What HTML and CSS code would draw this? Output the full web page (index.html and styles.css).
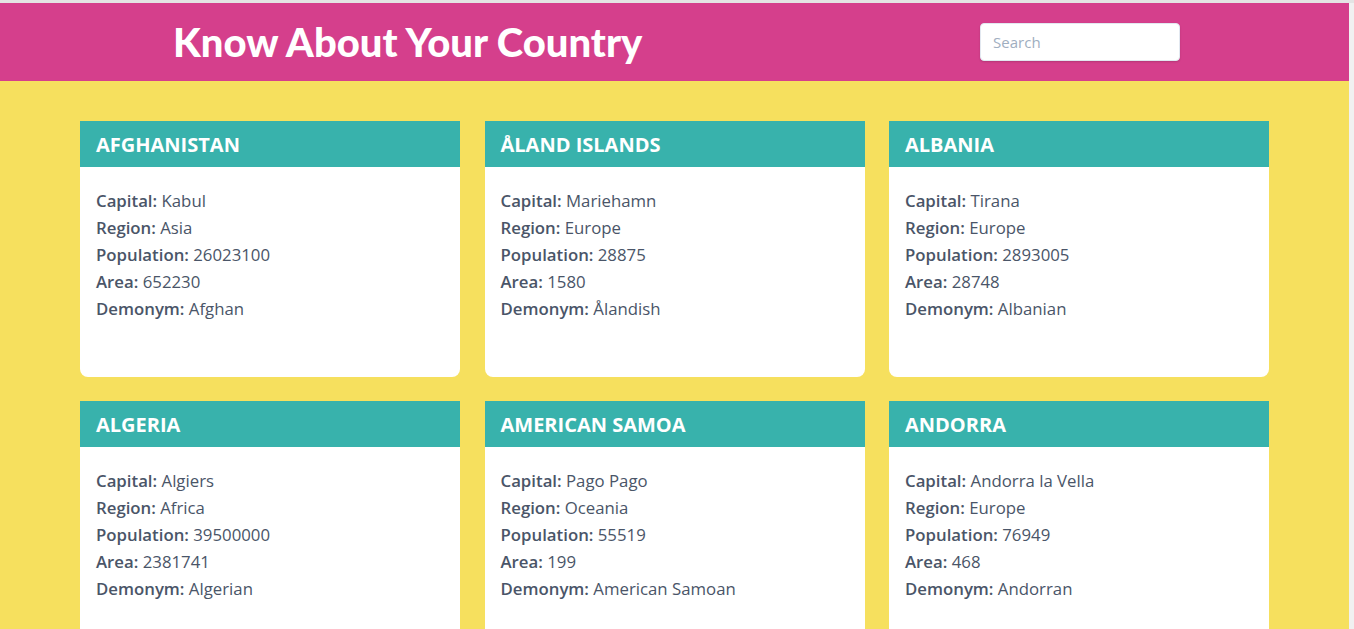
FILE: index.html
```html
<!DOCTYPE html>
<html lang="en">
<head>
<meta charset="utf-8">
<title>Know About Your Country</title>
<link rel="stylesheet" href="styles.css">
</head>
<body>
<div class="page">
<header class="topbar">
  <h1 class="brand">Know About Your Country</h1>
  <input class="search" type="text" placeholder="Search">
</header>
<main class="grid">
  <article class="card">
    <h2 class="card-title">Afghanistan</h2>
    <div class="card-body">
      <p><b>Capital:</b> Kabul</p>
      <p><b>Region:</b> Asia</p>
      <p><b>Population:</b> 26023100</p>
      <p><b>Area:</b> 652230</p>
      <p><b>Demonym:</b> Afghan</p>
    </div>
  </article>
  <article class="card">
    <h2 class="card-title">Åland Islands</h2>
    <div class="card-body">
      <p><b>Capital:</b> Mariehamn</p>
      <p><b>Region:</b> Europe</p>
      <p><b>Population:</b> 28875</p>
      <p><b>Area:</b> 1580</p>
      <p><b>Demonym:</b> Ålandish</p>
    </div>
  </article>
  <article class="card">
    <h2 class="card-title">Albania</h2>
    <div class="card-body">
      <p><b>Capital:</b> Tirana</p>
      <p><b>Region:</b> Europe</p>
      <p><b>Population:</b> 2893005</p>
      <p><b>Area:</b> 28748</p>
      <p><b>Demonym:</b> Albanian</p>
    </div>
  </article>
  <article class="card">
    <h2 class="card-title">Algeria</h2>
    <div class="card-body">
      <p><b>Capital:</b> Algiers</p>
      <p><b>Region:</b> Africa</p>
      <p><b>Population:</b> 39500000</p>
      <p><b>Area:</b> 2381741</p>
      <p><b>Demonym:</b> Algerian</p>
    </div>
  </article>
  <article class="card">
    <h2 class="card-title">American Samoa</h2>
    <div class="card-body">
      <p><b>Capital:</b> Pago Pago</p>
      <p><b>Region:</b> Oceania</p>
      <p><b>Population:</b> 55519</p>
      <p><b>Area:</b> 199</p>
      <p><b>Demonym:</b> American Samoan</p>
    </div>
  </article>
  <article class="card">
    <h2 class="card-title">Andorra</h2>
    <div class="card-body">
      <p><b>Capital:</b> Andorra la Vella</p>
      <p><b>Region:</b> Europe</p>
      <p><b>Population:</b> 76949</p>
      <p><b>Area:</b> 468</p>
      <p><b>Demonym:</b> Andorran</p>
    </div>
  </article>
</main>
</div>
</body>
</html>
```

FILE: styles.css
```css
* { box-sizing: border-box; }
html, body { margin: 0; padding: 0; }
html { background: #f1f1f1; }
body {
  border-top: 3px solid #e4e4e4;
  height: 629px;
  overflow: hidden;
  font-family: "Open Sans", "Noto Sans", sans-serif;
  color: #4A5568;
}
.page {
  width: calc(100% - 5px);
  height: 100%;
  background: #F6E05E;
}
.topbar {
  background: #D53F8C;
  height: 78px;
  display: flex;
  align-items: center;
  justify-content: space-around;
  padding-left: 4px;
}
.brand {
  margin: 0;
  font-family: Lato, sans-serif;
  font-weight: 900;
  font-size: 40px;
  color: #fff;
}
.search {
  width: 200px;
  height: 38px;
  border: 1px solid #e2e8f0;
  border-radius: 4px;
  padding: 0 12px;
  font-family: "Open Sans", sans-serif;
  font-size: 15px;
  color: #4A5568;
  box-shadow: 0 1px 2px rgba(0,0,0,0.15);
  outline: none;
}
.search::placeholder { color: #a0aec0; }
.grid {
  width: 1189px;
  margin: 40px auto 0;
  display: grid;
  grid-template-columns: repeat(3, 380px);
  column-gap: 24.5px;
  row-gap: 24px;
}
.card {
  background: #fff;
  height: 256px;
  border-radius: 0 0 8px 8px;
  overflow: hidden;
}
.card-title {
  margin: 0;
  height: 46px;
  background: #38B2AC;
  color: #fff;
  text-transform: uppercase;
  font-size: 20px;
  font-weight: 700;
  line-height: 46px;
  padding: 1px 16px 0;
}
.card-body {
  padding: 20px 16px;
}
.card-body p {
  margin: 0;
  font-size: 16.8px;
  line-height: 27px;
}
.card-body b { font-weight: 600; }
```
